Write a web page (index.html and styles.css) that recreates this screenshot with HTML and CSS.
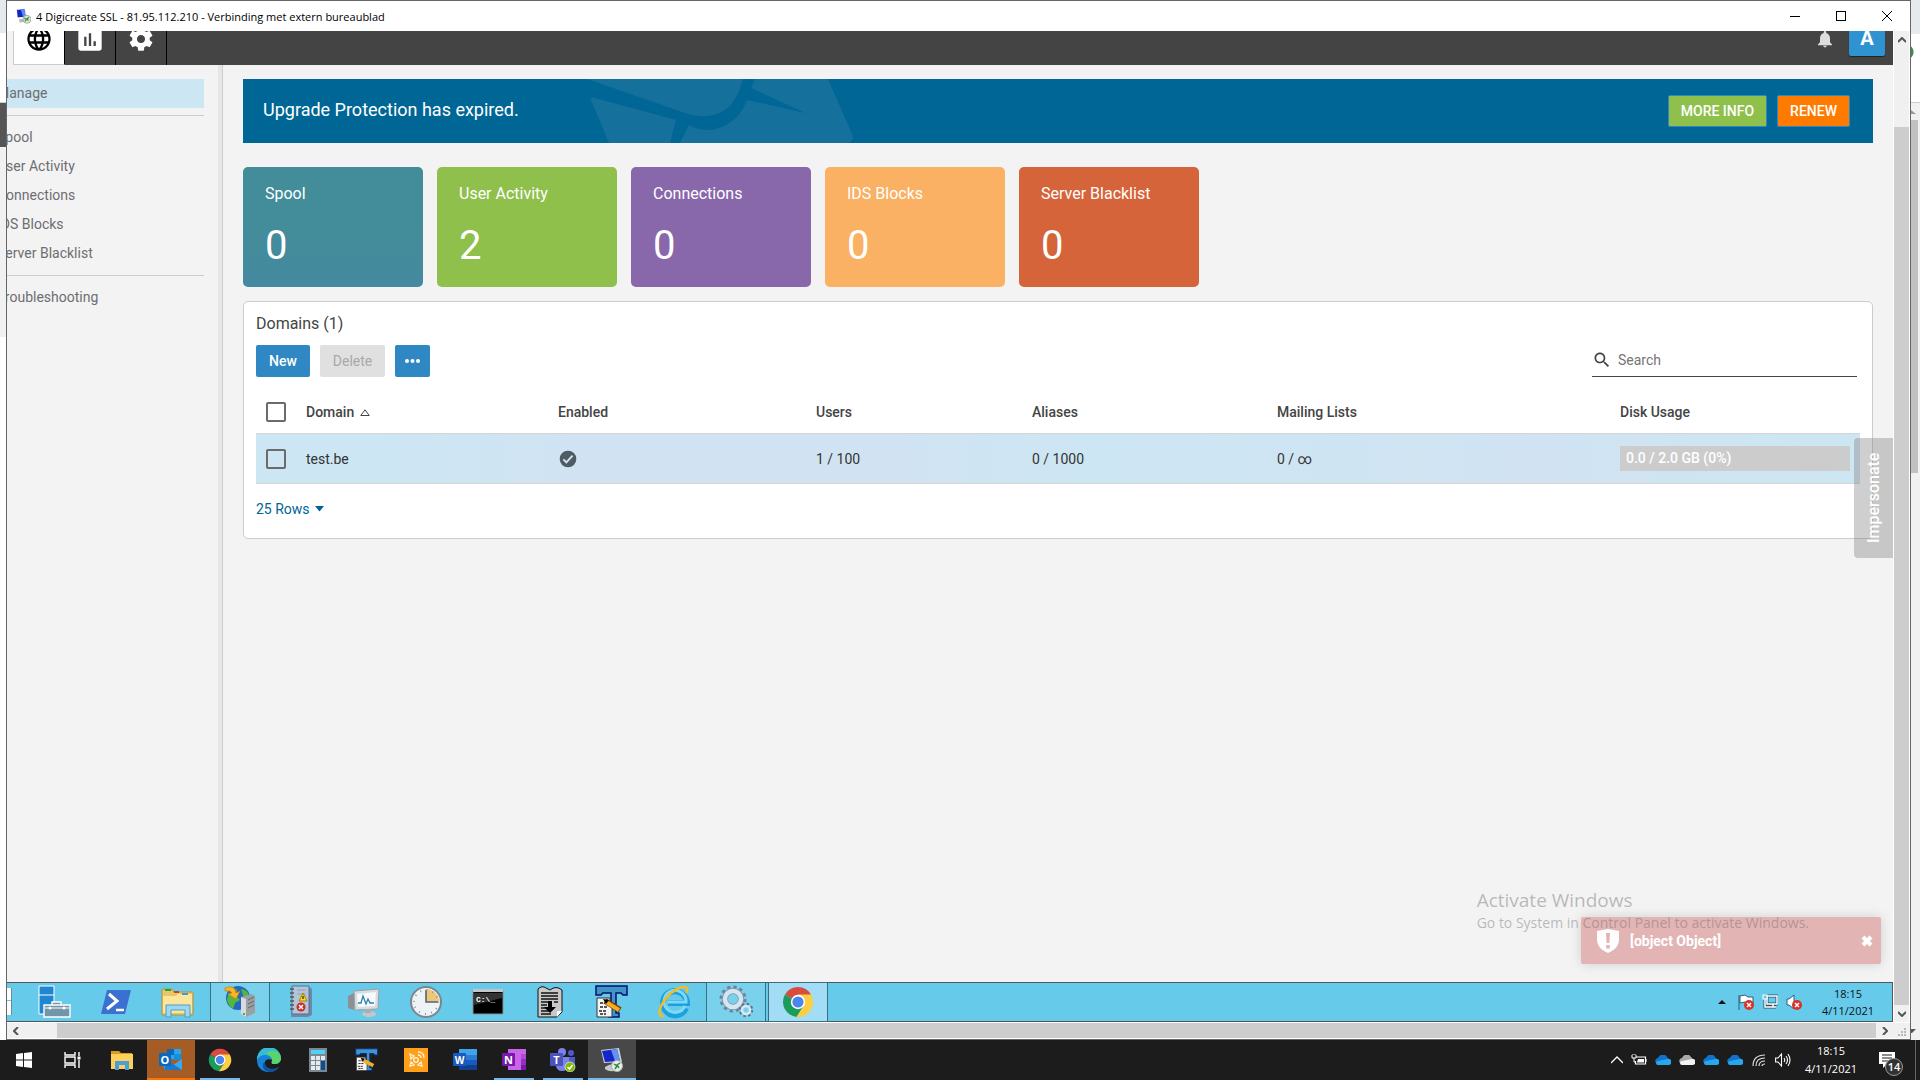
FILE: index.html
```html
<!DOCTYPE html>
<html lang="en">
<head>
    <meta charset="UTF-8">
    <meta name="viewport" content="width=device-width, initial-scale=1.0">
    <title>4 Digicreate SSL</title>
    <link rel="stylesheet" href="styles.css">
</head>
<body>

    <div class="workspace">
        <div class="edge edge-left"></div>

        <div class="window">
            <!-- Title bar -->
            <div class="titlebar">
                <svg class="title-icon" width="16" height="16" viewBox="0 0 24 24">
                    <path d="M2 2l13-1 3 13-14 1z" fill="#d8dce4"/>
                    <path d="M3 3l11-1 2 11-12 1z" fill="#1526c8"/>
                    <path d="M9 3l5-1 2 11-4 0z" fill="#5a8cf0"/>
                    <path d="M6 17l8-1 2 4-9 2z" fill="#b4b8bc"/>
                    <circle cx="18" cy="17" r="6" fill="#dfe6df" stroke="#8a948a"/>
                    <path d="M14 15l3 2-2 3M21 14l-3 2 2 3" stroke="#2f9a3c" stroke-width="2" fill="none"/>
                </svg>
                <span class="title-text">4 Digicreate SSL - 81.95.112.210 - Verbinding met extern bureaublad</span>
                <button class="win-btn" aria-label="Minimize"><svg width="10" height="10"><path d="M0 5.500h10" stroke="#000"/></svg></button>
                <button class="win-btn" aria-label="Maximize"><svg width="10" height="10"><rect x=".5" y=".5" width="9" height="9" fill="none" stroke="#000"/></svg></button>
                <button class="win-btn" aria-label="Close"><svg width="10" height="10"><path d="M0 0l10 10M10 0L0 10" stroke="#000"/></svg></button>
            </div>

            <div class="window-body">
                <div class="remote">
                    <!-- Top navigation -->
                    <header class="topnav">
                        <nav class="tabs">
                            <a class="tab active" href="#" aria-label="Domains">
                                <svg width="28" height="28" viewBox="0 0 24 24"><path fill="#000" d="M11.990 2C6.470 2 2 6.480 2 12s4.470 10 9.990 10C17.520 22 22 17.520 22 12S17.520 2 11.990 2zm6.930 6h-2.950c-.32-1.250-.78-2.450-1.380-3.560 1.840.63 3.370 1.910 4.330 3.560zM12 4.040c.83 1.200 1.480 2.530 1.910 3.960h-3.820c.43-1.430 1.080-2.760 1.910-3.960zM4.260 14C4.100 13.360 4 12.690 4 12s.1-1.360.26-2h3.380c-.08.66-.14 1.320-.14 2s.06 1.340.14 2H4.260zm.82 2h2.950c.32 1.250.78 2.450 1.380 3.560-1.840-.63-3.370-1.900-4.330-3.560zm2.950-8H5.080c.96-1.660 2.490-2.930 4.330-3.560C8.810 5.550 8.350 6.750 8.030 8zM12 19.960c-.83-1.200-1.480-2.530-1.910-3.960h3.820c-.43 1.430-1.080 2.760-1.910 3.960zM14.340 14H9.660c-.09-.66-.16-1.320-.16-2s.07-1.350.16-2h4.680c.09.65.16 1.320.16 2s-.07 1.340-.16 2zm.25 5.560c.6-1.110 1.060-2.310 1.380-3.560h2.950c-.96 1.650-2.490 2.930-4.330 3.560zM16.360 14c.08-.66.14-1.320.14-2s-.06-1.340-.14-2h3.380c.16.64.26 1.310.26 2s-.1 1.360-.26 2h-3.380z"/></svg>
                            </a>
                            <a class="tab" href="#" aria-label="Reports">
                                <svg width="28" height="28" viewBox="0 0 24 24"><rect x="2" y="2" width="20" height="20" rx="2" fill="#fff"/><path fill="#444" d="M7 10h2v8H7zM11 7h2v11h-2zM15 14h2v4h-2z"/></svg>
                            </a>
                            <a class="tab" href="#" aria-label="Settings">
                                <svg width="28" height="28" viewBox="0 0 24 24"><path fill="#fff" d="M19.430 12.980c.04-.32.07-.64.07-.98s-.03-.66-.07-.98l2.110-1.650c.19-.15.24-.42.12-.64l-2-3.460c-.12-.22-.39-.3-.61-.22l-2.490 1c-.52-.4-1.080-.73-1.690-.98l-.38-2.650C14.460 2.180 14.250 2 14 2h-4c-.25 0-.46.18-.49.42l-.38 2.650c-.61.25-1.170.59-1.690.98l-2.490-1c-.23-.09-.49 0-.61.22l-2 3.460c-.13.22-.07.49.12.64l2.110 1.650c-.04.32-.07.65-.07.98s.03.66.07.98l-2.110 1.650c-.19.15-.24.42-.12.64l2 3.460c.12.22.39.3.61.22l2.490-1c.52.4 1.080.73 1.690.98l.38 2.650c.03.24.24.42.49.42h4c.25 0 .46-.18.49-.42l.38-2.650c.61-.25 1.170-.59 1.690-.98l2.490 1c.23.09.49 0 .61-.22l2-3.460c.12-.22.07-.49-.12-.64l-2.110-1.650zM12 15.500c-1.930 0-3.500-1.570-3.500-3.500s1.570-3.500 3.500-3.500 3.500 1.570 3.500 3.500-1.570 3.500-3.500 3.500z"/></svg>
                            </a>
                        </nav>
                        <div class="topnav-right">
                            <button class="bell" aria-label="Notifications"><svg width="20" height="20" viewBox="0 0 24 24"><path fill="#ddd" d="M12 22c1.100 0 2-.9 2-2h-4c0 1.100.9 2 2 2zm6-6v-5c0-3.070-1.640-5.640-4.500-6.320V4c0-.83-.67-1.500-1.500-1.500s-1.500.67-1.500 1.500v.68C7.630 5.360 6 7.920 6 11v5l-2.500 2.500v1h17v-1L18 16z"/></svg></button>
                            <button class="avatar">A</button>
                        </div>
                    </header>

                    <div class="layout">
                        <!-- Sidebar -->
                        <nav class="sidebar">
                            <ul class="menu">
                                <li><a class="selected" href="#">Manage</a></li>
                            </ul>
                            <ul class="menu">
                                <li><a href="#">Spool</a></li>
                                <li><a href="#">User Activity</a></li>
                                <li><a href="#">Connections</a></li>
                                <li><a href="#">IDS Blocks</a></li>
                                <li><a href="#">Server Blacklist</a></li>
                            </ul>
                            <ul class="menu">
                                <li><a href="#">Troubleshooting</a></li>
                            </ul>
                        </nav>

                        <main class="main">
                            <div class="banner">
                                <svg class="banner-art" width="640" height="64" viewBox="0 0 640 64">
                                    <path d="M344 0H500Q496 16 487 27Q470 43 442 34Z"/>
                                    <path d="M348 21Q347 17 352 19L433 41L427 64H366Z"/>
                                    <path d="M446 46Q464 56 483 46Q498 38 504 21L562 34L508 9L512 0H585L610 57Q611 62 605 64H437Z"/>
                                </svg>
                                <span class="banner-text">Upgrade Protection has expired.</span>
                                <button class="banner-btn green">MORE INFO</button>
                                <button class="banner-btn orange">RENEW</button>
                            </div>

                            <div class="tiles">
                                <a class="tile teal" href="#"><span>Spool</span><strong>0</strong></a>
                                <a class="tile lime" href="#"><span>User Activity</span><strong>2</strong></a>
                                <a class="tile purple" href="#"><span>Connections</span><strong>0</strong></a>
                                <a class="tile amber" href="#"><span>IDS Blocks</span><strong>0</strong></a>
                                <a class="tile red" href="#"><span>Server Blacklist</span><strong>0</strong></a>
                            </div>

                            <section class="panel">
                                <h1>Domains (1)</h1>
                                <div class="toolbar">
                                    <button class="btn">New</button>
                                    <button class="btn" disabled>Delete</button>
                                    <button class="btn more" aria-label="More"><svg width="15" height="4"><circle cx="2" cy="2" r="2"/><circle cx="7.500" cy="2" r="2"/><circle cx="13" cy="2" r="2"/></svg></button>
                                    <label class="search">
                                        <svg width="20" height="20" viewBox="0 0 24 24"><path fill="#444" d="M15.500 14h-.79l-.28-.27C15.410 12.590 16 11.110 16 9.500 16 5.910 13.090 3 9.500 3S3 5.910 3 9.500 5.910 16 9.500 16c1.610 0 3.090-.59 4.230-1.570l.27.28v.79l5 4.990L20.490 19l-4.990-5zm-6 0C7.010 14 5 11.990 5 9.500S7.010 5 9.500 5 14 7.010 14 9.500 11.990 14 9.500 14z"/></svg>
                                        <input type="text" placeholder="Search">
                                    </label>
                                </div>

                                <table class="grid">
                                    <thead>
                                        <tr>
                                            <th class="col-check"><input type="checkbox" aria-label="Select all"></th>
                                            <th class="col-domain">Domain <svg width="10" height="7" viewBox="0 0 10 7"><path d="M5 .8L9.200 6.500H.8z" fill="none" stroke="#444"/></svg></th>
                                            <th class="col-enabled">Enabled</th>
                                            <th class="col-users">Users</th>
                                            <th class="col-aliases">Aliases</th>
                                            <th>Mailing Lists</th>
                                            <th class="col-disk">Disk Usage</th>
                                        </tr>
                                    </thead>
                                    <tbody>
                                        <tr>
                                            <td><input type="checkbox" aria-label="Select test.be"></td>
                                            <td>test.be</td>
                                            <td><svg class="check" width="20" height="20" viewBox="0 0 24 24"><circle cx="12" cy="12" r="10" fill="#4f5b62"/><path d="M6.500 12.500l3.500 3.500 7.500-8" fill="none" stroke="#d1e3f2" stroke-width="2.400"/></svg></td>
                                            <td>1 / 100</td>
                                            <td>0 / 1000</td>
                                            <td>0 / ∞</td>
                                            <td><div class="usage">0.0 / 2.0 GB (0%)</div></td>
                                        </tr>
                                    </tbody>
                                </table>

                                <div class="pager">
                                    <select aria-label="Rows per page"><option>25 Rows</option></select>
                                    <svg width="10" height="6"><path d="M0 0h9L4.500 5.500z" fill="#006596"/></svg>
                                </div>
                            </section>
                        </main>
                    </div>

                    <button class="impersonate">Impersonate</button>

                    <div class="toast">
                        <svg width="24" height="24" viewBox="0 0 24 24"><path fill="#fff" d="M12 0l11 2v8c0 7-4 11-11 14C5 21 1 17 1 10V2z"/><path fill="#e3b4b4" d="M10 4h4l-.6 10h-2.800zM10.200 16h3.600v3.400h-3.600z"/></svg>
                        <span>[object Object]</span>
                        <button aria-label="Dismiss"><svg width="12" height="12"><path d="M2 2l8 8M10 2l-8 8" stroke="#fff" stroke-width="4"/></svg></button>
                    </div>

                    <div class="activate">
                        <p class="activate-title">Activate Windows</p>
                        <p>Go to System in Control Panel to activate Windows.</p>
                    </div>

                    <!-- Taskbar of the remote server -->
                    <div class="server-bar">
                        <span class="server-start"></span>
                        <div class="server-apps">
                            <button aria-label="Server Manager"><svg width="34" height="34" viewBox="0 0 34 34"><path d="M2 1h15v28H2z" fill="#1f86d1" stroke="#fff"/><path d="M2 10h15" stroke="#fff"/><path d="M7 20h26v12H7zM15 20v-3h9v3" fill="#7295aa" stroke="#fff" stroke-width="1.400"/><path d="M8 23h24" stroke="#fff"/><circle cx="13" cy="23" r="1.500" fill="#fff"/><circle cx="27" cy="23" r="1.500" fill="#fff"/></svg></button>
                            <button aria-label="PowerShell"><svg width="34" height="34" viewBox="0 0 34 34"><path d="M8 5h24l-6 24H2z" fill="#3b6fd0"/><path d="M10 9l8 7-10 8" fill="none" stroke="#fff" stroke-width="3"/><path d="M17 25h8" stroke="#fff" stroke-width="2.500"/></svg></button>
                            <button aria-label="Explorer"><svg width="34" height="34" viewBox="0 0 34 34"><path d="M1 5q0-1 1-1h9l2 3h18q1 0 1 1v22H1z" fill="#e8c766" stroke="#b8923c"/><path d="M2 11h13l2-2h14v19H2z" fill="#fbe69c"/><path d="M4 4h6v2H4z" fill="#27a42c"/><path d="M13 6h5v2h-5z" fill="#d93c2c"/><path d="M21 8h6v2h-6z" fill="#3f98e0"/><path d="M5 32V20h24v12h-5v-7H10v7z" fill="#9ed7f2" stroke="#4c9fc9"/></svg></button>
                            <button class="open" aria-label="IIS"><svg width="34" height="34" viewBox="0 0 34 34"><circle cx="15" cy="13" r="12" fill="#2566c4"/><path d="M5 10q5-6 9-6l-1 7 4 4-5 3-2 6q-5-4-6-9zM18 4q7 1 8 7l-5 2z" fill="#52b83c"/><path d="M2 3q10-4 11 5l4-2-4 8-8-5 4-1q-2-3-7-2z" fill="#f9b522" stroke="#c47c0c" stroke-width=".7"/><path d="M18 12l10-3 4 2v17l-9 4-5-3z" fill="#9b9fa3"/><path d="M18 12l5 2v18l-5-3z" fill="#d9dcdf"/><path d="M25 15l6-3M25 19l6-3M25 23l6-3" stroke="#636669"/><path d="M20 28h2v2h-2z" fill="#36b83a"/></svg></button>
                            <button aria-label="Event Viewer"><svg width="34" height="34" viewBox="0 0 34 34"><path d="M8 2h16l3 2v26l-4 2H6z" fill="#6f87a8"/><path d="M7 1h17v28H7z" fill="#b4c5da" stroke="#57718f"/><path d="M5 4h4M5 8h4M5 12h4M5 16h4M5 20h4M5 24h4" stroke="#555" stroke-width="1.500"/><path d="M12 5h9M12 9h9" stroke="#8ea3bd"/><path d="M18 8l4 8h-8z" fill="#ffd91a" stroke="#a48500"/><path d="M18 11v3" stroke="#000"/><circle cx="16" cy="22" r="4.500" fill="#cf2a2a"/><path d="M14 20l4 4M18 20l-4 4" stroke="#fff" stroke-width="1.500"/></svg></button>
                            <button aria-label="Performance Monitor"><svg width="34" height="34" viewBox="0 0 34 34"><path d="M1 11l6-3v17l-6-2z" fill="#8b9096"/><path d="M7 6l25-2-1 20-23 1z" fill="#d9dde0" stroke="#9ba0a5"/><path d="M10 9l19-2-1 14-17 1z" fill="#f5fafd"/><path d="M11 18h3l2-7 3 8 2-5 2 4h4" fill="none" stroke="#2f7fae" stroke-width="1.300"/><ellipse cx="22" cy="29" rx="7" ry="3" fill="#c3c7cb"/><path d="M18 24h6v4h-6z" fill="#a9aeb3"/></svg></button>
                            <button aria-label="Task Scheduler"><svg width="34" height="34" viewBox="0 0 34 34"><circle cx="17" cy="17" r="15" fill="#eef3f7" stroke="#7d858b" stroke-width="2"/><path d="M17 17V4a13 13 0 0 1 13 13z" fill="#ecc777"/><path d="M17 5v12h12" fill="none" stroke="#54646f" stroke-width="1.600"/><circle cx="17" cy="17" r="12" fill="none" stroke="#8898a3" stroke-width="2" stroke-dasharray="1 5.280"/></svg></button>
                            <button aria-label="Command Prompt"><svg width="34" height="34" viewBox="0 0 34 34"><path d="M2 5h30v24H2z" fill="#000" stroke="#8a8f93"/><path d="M2 4h30v3H2z" fill="#c2c6c9"/><path d="M3 8h28v5L3 20z" fill="#333"/><text x="5" y="17" font-family="Liberation Mono" font-size="8" font-weight="bold" fill="#fff">C:\_</text></svg></button>
                            <button aria-label="Log"><svg width="34" height="34" viewBox="0 0 34 34"><path d="M5 4q4-4 8-1l4 2q6-5 12 0v22l-5 5H5z" fill="#c8c8c8" stroke="#111"/><path d="M8 8h17M8 11h17M8 14h17M8 17h7M21 17h4M8 20h6M8 23h8M8 26h10M8 29h10" stroke="#111" stroke-width="1.400"/><path d="M15 16h4v6h4l-6 6-6-6h4z" fill="#000"/><path d="M24 32v-6h5z" fill="#fff"/></svg></button>
                            <button aria-label="Text Editor"><svg width="34" height="34" viewBox="0 0 34 34"><path d="M1 1h31v9h-4l-2-2h-5v20h3v4H14v-4h2V8H8l-2 2H1z" fill="#4094c8" stroke="#07116e" stroke-width="1.500"/><path d="M2 13h13v8l2 2v9H2z" fill="#f4f4f4" stroke="#333"/><path d="M5 18h7M5 22h8M4 26h7M5 29h6" stroke="#222" stroke-width="1.300" stroke-dasharray="3 1"/><path d="M10 16l15 9" stroke="#7c3a00" stroke-width="6"/><path d="M11 17l13 8" stroke="#f8ae1c" stroke-width="4"/><path d="M8 14l6 1-3 4z" fill="#000"/></svg></button>
                            <button aria-label="Internet Explorer"><svg width="34" height="34" viewBox="0 0 34 34"><path d="M29 23a12 12 0 1 1 1-5H11" fill="none" stroke="#1ba1df" stroke-width="6"/><path d="M28 21a11 11 0 1 1 1-4H11" fill="none" stroke="#7fd8f8" stroke-width="3"/><path d="M7 31Q-1 32 5 19Q14 5 25 2Q33 1 29 8" fill="none" stroke="#f2bd22" stroke-width="2.500"/></svg></button>
                            <button class="open" aria-label="Services"><svg width="34" height="34" viewBox="0 0 34 34"><circle cx="14" cy="14" r="11.500" fill="none" stroke="#6d8499" stroke-width="4" stroke-dasharray="3.100 2.920"/><circle cx="14" cy="14" r="8" fill="none" stroke="#7d94a9" stroke-width="6"/><circle cx="14" cy="14" r="8" fill="none" stroke="#d5e6f2" stroke-width="4.500"/><circle cx="27" cy="25" r="6" fill="none" stroke="#5f7489" stroke-width="2.500" stroke-dasharray="2.400 2.300"/><circle cx="27" cy="25" r="4" fill="none" stroke="#dce9f3" stroke-width="2.500"/></svg></button>
                            <button class="open front" aria-label="Chrome"><svg width="32" height="32" viewBox="0 0 32 32"><path d="M16 16L3 8.500A15 15 0 0 1 29 8.500z" fill="#d94b3f"/><path d="M16 16L3 8.500a15 15 0 0 0 11.500 22.400L22 19.500z" fill="#1c9c5a"/><path d="M16 16l6 3.500-7.500 11.400A15 15 0 0 0 29 8.500H16z" fill="#fcce42"/><circle cx="16" cy="16" r="7.200" fill="#fff"/><circle cx="16" cy="16" r="5.600" fill="#4a86ee"/></svg></button>
                        </div>
                        <div class="server-tray">
                            <svg class="tray-more" width="8" height="4"><path d="M0 4h8L4 0z" fill="#111"/></svg>
                            <svg width="16" height="16" viewBox="0 0 16 16"><path d="M1 1v15M2 2l5-1 3 2h5v7H9L7 8 2 9z" fill="#fff" stroke="#2b5f78"/><circle cx="11" cy="11" r="5" fill="#dc3026"/><path d="M9 9l4 4M13 9l-4 4" stroke="#fff" stroke-width="1.500"/></svg>
                            <svg width="16" height="16" viewBox="0 0 16 16"><path d="M5 2h10v8H5zM8 13h6M11 10v3M3 5v8h5" fill="none" stroke="#26546c" stroke-width="3"/><path d="M5 2h10v8H5zM8 13h6M11 10v3M3 5v8h5" fill="none" stroke="#fff" stroke-width="1.500"/><rect x="1" y="1" width="4" height="4" fill="#66caeb" stroke="#fff"/></svg>
                            <svg width="16" height="16" viewBox="0 0 16 16"><path d="M1 5h2l5-4v14l-5-4H1z" fill="#fff" stroke="#2b5f78"/><circle cx="11" cy="11" r="5" fill="#dc3026"/><path d="M9 9l4 4M13 9l-4 4" stroke="#fff" stroke-width="1.500"/></svg>
                            <div class="clock"><span>18:15</span><span>4/11/2021</span></div>
                        </div>
                    </div>
                </div>

                <div class="vscroll">
                    <button aria-label="Scroll up"><svg width="8" height="6"><path d="M0 5l4-4 4 4" fill="none" stroke="#555" stroke-width="2"/></svg></button>
                    <div class="vthumb"></div>
                    <button aria-label="Scroll down"><svg width="8" height="6"><path d="M0 1l4 4 4-4" fill="none" stroke="#555" stroke-width="2"/></svg></button>
                </div>
            </div>

            <div class="hscroll">
                <button aria-label="Scroll left"><svg width="6" height="8"><path d="M5 0L1 4l4 4" fill="none" stroke="#555" stroke-width="2"/></svg></button>
                <div class="hthumb"></div>
                <button aria-label="Scroll right"><svg width="6" height="8"><path d="M1 0l4 4-4 4" fill="none" stroke="#555" stroke-width="2"/></svg></button>
                <svg class="grip" width="10" height="10" fill="#b8b8b8"><path d="M7 0h2v2H7zM4 3h2v2H4zM7 3h2v2H7zM1 6h2v2H1zM4 6h2v2H4zM7 6h2v2H7z"/></svg>
            </div>
        </div>

        <div class="edge edge-right">
            <svg width="6" height="4"><path d="M0 0l5 4H0z" fill="#999"/></svg>
            <svg width="6" height="4"><path d="M0 0h5L1 4H0z" fill="#555"/></svg>
        </div>
    </div>

    <!-- Taskbar of the local machine -->
    <footer class="host-bar">
        <div class="host-apps">
            <button aria-label="Start"><svg width="16" height="16" viewBox="0 0 16 16"><path d="M0 2l7-1v6.500H0zM8 1l8-1v7.500H8zM0 8.500h7V15l-7-1zM8 8.500h8V16l-8-1z" fill="#fff"/></svg></button>
            <button aria-label="Task View"><svg width="18" height="16" viewBox="0 0 18 16"><path d="M1 0v3h10V0M1 16v-3h10v3M1 5h10v6H1zM15 0v4M15 8v8" fill="none" stroke="#fff" stroke-width="1.400"/><path d="M13.500 4.500h3v3h-3z" fill="#fff"/></svg></button>
            <button aria-label="File Explorer"><svg width="24" height="24" viewBox="0 0 24 24"><path d="M1 3h8l2 2h11v5H1z" fill="#dc9a1a"/><path d="M1 6h22v15H1z" fill="#fdd05b"/><path d="M5 22v-9h14v9h-4v-5H9v5z" fill="#4a9fdb"/></svg></button>
            <button class="alert" aria-label="Outlook"><svg width="26" height="24" viewBox="0 0 26 24"><path d="M9 1h14v10H9z" fill="#28a8ea"/><path d="M9 1h7v6H9z" fill="#0f68b8"/><path d="M16 6h7v6h-7z" fill="#1490df"/><path d="M6 22h18V11l-9 6-9-6z" fill="#3fa7ea"/><path d="M6 22h18L9 12z" fill="#1b79cb"/><rect x="1" y="5" width="12" height="13" rx="1" fill="#0969c0"/><text x="7" y="15.500" font-family="Open Sans" font-size="11" font-weight="bold" text-anchor="middle" fill="#fff">O</text></svg></button>
            <button class="running" aria-label="Google Chrome"><svg width="24" height="24" viewBox="0 0 32 32"><path d="M16 16L3 8.500A15 15 0 0 1 29 8.500z" fill="#d94b3f"/><path d="M16 16L3 8.500a15 15 0 0 0 11.500 22.400L22 19.500z" fill="#1c9c5a"/><path d="M16 16l6 3.500-7.500 11.400A15 15 0 0 0 29 8.500H16z" fill="#fcce42"/><circle cx="16" cy="16" r="7.200" fill="#fff"/><circle cx="16" cy="16" r="5.600" fill="#4a86ee"/></svg></button>
            <button aria-label="Edge"><svg width="24" height="24" viewBox="0 0 24 24"><path d="M0 12A12 12 0 0 1 24 10c0 5-4 6-7 6-2 0-3-1-2-3 1-5-10-7-15-1z" fill="#35c1b4"/><path d="M0 12A12 12 0 0 1 12 0c7 0 11 4 12 9-3-6-17-8-24 3z" fill="#36b9e4"/><path d="M24 10c0 5-4 6-7 6-2 0-3-1-2-3 0-5-3-7-7-7 7-6 15-3 16 4z" fill="#5bd46c"/><path d="M0 12c3-6 13-7 15 0-4-2-8 0-7 4 1 5 8 7 14 3-5 8-22 7-22-7z" fill="#1684d8"/><path d="M8 14c-1 6 7 9 14 5-3 5-9 6-13 4-4-3-4-8-1-9z" fill="#0c529e"/></svg></button>
            <button aria-label="Calculator"><svg width="18" height="24" viewBox="0 0 18 24"><path d="M0 0h18v24H0z" fill="#7b8791"/><path d="M2 2h14v4H2z" fill="#4ed2f5"/><path d="M2 8h4v4H2zM7 8h4v4H7zM12 8h4v4h-4zM2 13h4v4H2zM7 13h4v4H7zM2 18h4v4H2zM7 18h4v4H7z" fill="#e6eaee"/><path d="M12 13h4v9h-4z" fill="#0b4f91"/></svg></button>
            <button aria-label="Text Editor"><svg width="24" height="24" viewBox="0 0 34 34"><path d="M1 1h31v9h-4l-2-2h-5v20h3v4H14v-4h2V8H8l-2 2H1z" fill="#4094c8" stroke="#0b2f7e" stroke-width="1.500"/><path d="M2 13h13v8l2 2v9H2z" fill="#f4f4f4" stroke="#333"/><path d="M5 18h7M5 22h8M4 26h7M5 29h6" stroke="#222" stroke-width="1.300" stroke-dasharray="3 1"/><path d="M11 17l15 8" stroke="#f8ae1c" stroke-width="5"/><path d="M8 14l6 1-3 4z" fill="#000"/></svg></button>
            <button aria-label="Remote Manager"><svg width="24" height="24" viewBox="0 0 24 24"><path d="M0 0h24v24H0z" fill="#ff9f1a"/><g fill="none" stroke="#fff3dc" stroke-width="1.300"><circle cx="12" cy="12" r="2.300"/><path d="M6 6l4 2-3 3zM6 18l1-4 3 3zM18 18l-4-1 3-3zM14 7q3 0 3 3M14 4q6 0 6 6"/></g></svg></button>
            <button aria-label="Word"><svg width="24" height="22" viewBox="0 0 24 22"><path d="M6 0h18v6H6z" fill="#41a5ee"/><path d="M6 6h18v5H6z" fill="#2b7cd3"/><path d="M6 11h18v5H6z" fill="#185abd"/><path d="M6 16h18v5H6z" fill="#103f91"/><rect y="4" width="13" height="13" rx="1" fill="#185abd"/><text x="6.500" y="14.500" font-family="Open Sans" font-size="10" font-weight="bold" text-anchor="middle" fill="#fff">W</text></svg></button>
            <button class="running" aria-label="OneNote"><svg width="24" height="22" viewBox="0 0 24 22"><path d="M6 0h18v21H6z" fill="#ca64ea"/><path d="M19 5h5v5h-5z" fill="#ae4bd5"/><path d="M19 10h5v6h-5z" fill="#9332bf"/><path d="M19 16h5v5h-5z" fill="#7719aa"/><rect y="4" width="13" height="13" rx="1" fill="#7719aa"/><text x="6.500" y="14.500" font-family="Open Sans" font-size="11" font-weight="bold" text-anchor="middle" fill="#fff">N</text></svg></button>
            <button class="running" aria-label="Teams"><svg width="26" height="24" viewBox="0 0 26 24"><circle cx="12" cy="4" r="4" fill="#7b83eb"/><circle cx="21" cy="5" r="3" fill="#5059c9"/><path d="M15 9h10v8q-1 4-6 4z" fill="#5059c9"/><path d="M6 9h13v9q-2 5-7 5t-6-5z" fill="#7b83eb"/><rect y="5" width="13" height="13" rx="1" fill="#4b53bc"/><text x="6.500" y="15.500" font-family="Open Sans" font-size="11" font-weight="bold" text-anchor="middle" fill="#fff">T</text><circle cx="20" cy="19" r="5" fill="#7fba00" stroke="#fff" stroke-width=".6"/><path d="M17.500 19l2 2 3-4" fill="none" stroke="#fff" stroke-width="1.500"/></svg></button>
            <button class="current" aria-label="Remote Desktop"><svg width="24" height="24" viewBox="0 0 24 24"><path d="M1 2l18-2 3 14-18 1z" fill="#c9ced8"/><path d="M2 3l15-2 3 12-15 1z" fill="#1526c8"/><path d="M11 2l6-1 3 12-5 0z" fill="#6493ee"/><path d="M5 19q7-5 12-1l1 4q-8 3-13-1z" fill="#c6cacd"/><circle cx="17" cy="18" r="5.500" fill="#e9eee9" stroke="#aab3aa"/><path d="M14 16l3 2-2 3M20 15l-3 2 2 3" stroke="#2f8a3c" stroke-width="1.500" fill="none"/></svg></button>
        </div>
        <div class="host-tray">
            <svg width="12" height="8"><path d="M0 7l6-6 6 6" fill="none" stroke="#fff" stroke-width="1.300"/></svg>
            <svg width="16" height="12" viewBox="0 0 16 12"><path d="M5 3h9.500v7H4.500V7M15 5v3" fill="none" stroke="#fff" stroke-width="1.200"/><path d="M7 5h6v3.500H6z" fill="#fff"/><path d="M1 1v3h4V1M3 4v4h2M2 0v1M4 0v1" stroke="#fff" fill="none"/></svg>
            <svg width="16" height="10" viewBox="0 0 16 10"><path d="M1 8a3 3 0 0 1 2-5 5 5 0 0 1 9-1l3 3-7 5z" fill="#1173cf"/><path d="M3 10a2 2 0 0 1 0-4l5-1 5-1a3 3 0 0 1 1 6z" fill="#28a8ea"/></svg>
            <svg width="16" height="10" viewBox="0 0 16 10"><path d="M1 8a3 3 0 0 1 2-5 5 5 0 0 1 9-1l3 3-7 5z" fill="#a9a9a9"/><path d="M3 10a2 2 0 0 1 0-4l5-1 5-1a3 3 0 0 1 1 6z" fill="#f2f2f2"/></svg>
            <svg width="16" height="10" viewBox="0 0 16 10"><path d="M1 8a3 3 0 0 1 2-5 5 5 0 0 1 9-1l3 3-7 5z" fill="#1173cf"/><path d="M3 10a2 2 0 0 1 0-4l5-1 5-1a3 3 0 0 1 1 6z" fill="#28a8ea"/></svg>
            <svg width="16" height="10" viewBox="0 0 16 10"><path d="M1 8a3 3 0 0 1 2-5 5 5 0 0 1 9-1l3 3-7 5z" fill="#1173cf"/><path d="M3 10a2 2 0 0 1 0-4l5-1 5-1a3 3 0 0 1 1 6z" fill="#28a8ea"/></svg>
            <svg width="16" height="14" viewBox="0 0 16 14"><path d="M2 13Q2 2 14 2M5 13q0-8 9-8M8 13q0-5 6-5M11 13q0-2 3-2" fill="none" stroke="#ddd" stroke-width="1.200"/></svg>
            <svg width="16" height="14" viewBox="0 0 16 14"><path d="M.6 5H3l3.500-4v12L3 9H.6zM9 5q1.500 2 0 4M11 3q3 4 0 8M13 1q4 6 0 12" fill="none" stroke="#fff" stroke-width="1.100"/></svg>
            <div class="clock"><span>18:15</span><span>4/11/2021</span></div>
            <button class="action-center" aria-label="Notifications">
                <svg width="16" height="16" viewBox="0 0 16 16"><path d="M0 0h16v12H8l-4 4v-4H0z" fill="#fff"/><path d="M3 3h10M3 6h10M3 9h6" stroke="#1c1c1c"/></svg>
                <span class="badge">14</span>
            </button>
        </div>
    </footer>

</body>
</html>
```
FILE: styles.css
```css
* {
    box-sizing: border-box;
}
body {
    margin: 0;
    height: 100vh;
    display: flex;
    flex-direction: column;
    overflow: hidden;
    font-family: Roboto, sans-serif;
    font-size: 14px;
    color: #444;
}
button {
    font-family: inherit;
    padding: 0;
    border: none;
    background: none;
    cursor: pointer;
}
a {
    text-decoration: none;
    color: inherit;
}
svg {
    display: block;
    flex: none;
}

/* Desktop behind the window */
.workspace {
    flex: 1;
    min-height: 0;
    display: flex;
}
.edge-left {
    width: 6px;
    background: linear-gradient(#e6eaed 33px, #fff 33px 102px, #ccc 102px 103px, #555 103px 147px, #f1f1f1 147px 337px, #fff 337px);
}
.edge-right {
    width: 9px;
    padding: 110px 0 7px;
    display: flex;
    flex-direction: column;
    justify-content: space-between;
    background:
        linear-gradient(#c1c1c1, #c1c1c1) 0 120px / 7px 353px no-repeat,
        radial-gradient(circle at -5px 52px, #3c8a57 7px, transparent 8px),
        linear-gradient(#e6eaed 34px, #fff 34px 102px, #ccc 102px 103px, #f1f1f1 103px);
}

/* Window */
.window {
    flex: 1;
    min-width: 0;
    display: flex;
    flex-direction: column;
    border: 1px solid #666;
    background: #f0f0f0;
}
.titlebar {
    height: 30px;
    display: flex;
    align-items: center;
    background: #fff;
    padding-left: 8px;
}
.title-text {
    flex: 1;
    margin-left: 5px;
    font-family: "Open Sans", sans-serif;
    font-size: 11px;
    color: #000;
}
.win-btn {
    width: 46px;
    height: 30px;
    display: flex;
    align-items: center;
    justify-content: center;
}
.window-body {
    flex: 1;
    min-height: 0;
    display: flex;
}
.remote {
    position: relative;
    flex: 1;
    min-width: 0;
    display: flex;
    flex-direction: column;
    overflow: hidden;
    background: #f3f3f3;
}

/* Top navigation */
.topnav {
    flex: none;
    height: 34px;
    margin-left: 6px;
    display: flex;
    justify-content: space-between;
    overflow: hidden;
    background: #444;
}
.tabs {
    display: flex;
}
.tab {
    width: 51px;
    display: flex;
    align-items: flex-end;
    justify-content: center;
    padding-bottom: 12px;
    border-right: 1px solid #000;
}
.tab.active {
    width: 52px;
    background: #fff;
    border-left: 1px solid #ccc;
    border-bottom: 1px solid #ccc;
    padding-bottom: 11px;
}
.topnav-right {
    display: flex;
    align-items: flex-end;
    gap: 14px;
    padding: 0 8px 9px 0;
}
.bell {
    padding-bottom: 7px;
}
.avatar {
    width: 36px;
    height: 36px;
    border-radius: 2px;
    background: #2f93d1;
    color: #fff;
    font-size: 20px;
    font-weight: 700;
    box-shadow: 0 1px 1px #222;
}

/* Sidebar */
.layout {
    flex: 1;
    min-height: 0;
    display: flex;
}
.sidebar {
    width: 216px;
    padding: 14px 14px 0 0;
    border-right: 1px solid #ccc;
    box-shadow: inset -4px 0 #e6e6e6;
}
.menu {
    list-style: none;
    width: 197px;
    margin: 0;
    padding: 0;
}
.menu + .menu {
    margin-top: 7px;
    padding-top: 7px;
    border-top: 1px solid #ccc;
}
.menu a {
    display: block;
    margin-left: -10px;
    height: 29px;
    line-height: 28px;
    color: #6d6e71;
}
.menu a.selected {
    background: #cde6f3;
}

/* Content */
.main {
    flex: 1;
    min-width: 0;
    padding: 14px 20px;
}
.banner {
    position: relative;
    height: 64px;
    display: flex;
    align-items: center;
    gap: 10px;
    padding: 0 23px 0 20px;
    background: #006696;
    color: #fff;
}
.banner-art {
    position: absolute;
    left: 0;
    top: 0;
    fill: #15709c;
}
.banner-text {
    position: relative;
    flex: 1;
    font-size: 18px;
    line-height: 22px;
    padding-bottom: 2px;
}
.banner-btn {
    height: 32px;
    padding: 0 12px;
    border: 1px solid #2f88c5;
    border-radius: 2px;
    color: #fff;
    font-size: 14px;
    font-weight: 500;
}
.green {
    background: #90c04c;
}
.orange {
    background: #ff7b00;
}
.tiles {
    display: flex;
    gap: 14px;
    margin: 24px 0 14px;
}
.tile {
    width: 180px;
    height: 120px;
    padding: 17px 22px;
    border-radius: 5px;
    color: #fff;
    font-size: 16px;
}
.tile span {
    display: block;
    line-height: 20px;
}
.tile strong {
    display: block;
    margin-top: 18px;
    font-size: 40px;
    font-weight: 400;
    line-height: 48px;
}
.teal {
    background: linear-gradient(#438c99 50%, #4589a0);
}
.lime {
    background: #90c04c;
}
.purple {
    background: #8967ab;
}
.amber {
    background: #fab164;
}
.red {
    background: #d6643a;
}

/* Domains panel */
.panel {
    padding: 12px 12px 19px;
    background: #fff;
    border: 1px solid #ccc;
    border-radius: 5px;
}
.panel h1 {
    margin: 0 0 11px;
    font-size: 16px;
    font-weight: 400;
    line-height: 20px;
}
.toolbar {
    display: flex;
    gap: 10px;
}
.btn {
    height: 32px;
    padding: 0 13px;
    border-radius: 2px;
    background: #2f87c3;
    color: #fff;
    font-size: 14px;
    font-weight: 500;
}
.btn:disabled {
    background: #e0e0e0;
    color: #a9a9a9;
    font-weight: 400;
}
.btn.more {
    padding: 0 10px;
    fill: #fff;
}
.search {
    width: 265px;
    height: 32px;
    margin-left: auto;
    margin-right: 3px;
    padding-bottom: 1px;
    display: flex;
    align-items: center;
    gap: 4px;
    border-bottom: 1px solid #444;
}
.search input {
    flex: 1;
    min-width: 0;
    border: none;
    outline: none;
    font-family: inherit;
    font-size: 14px;
}
.search input::placeholder {
    color: #757575;
}
.grid {
    width: 100%;
    margin-top: 14px;
    table-layout: fixed;
    border-collapse: collapse;
}
.grid th,
.grid td {
    padding: 1px 0 0;
    text-align: left;
}
.grid th {
    height: 42px;
    font-weight: 500;
}
.grid th svg {
    display: inline-block;
    margin-left: 2px;
    vertical-align: 1px;
}
.grid td {
    height: 50px;
    border-top: 1px solid #d5d5d5;
    border-bottom: 1px solid #d5d5d5;
    color: #333;
}
.grid tbody tr {
    background: linear-gradient(90deg, #cde6f3 8%, #d1e3f2 20%, #d1e3f2 40%, #cde6f3 52%, #d1e3f2 80%, #cde6f3);
}
.grid input {
    display: block;
    appearance: none;
    width: 20px;
    height: 20px;
    margin: 0 10px;
    border: 2px solid #6b6b6b;
    border-radius: 2px;
}
.col-check {
    width: 50px;
}
.col-domain {
    width: 252px;
}
.col-enabled {
    width: 258px;
}
.col-users {
    width: 216px;
}
.col-aliases {
    width: 245px;
}
.col-disk {
    width: 240px;
}
.usage {
    height: 25px;
    margin-right: 10px;
    padding-left: 6px;
    line-height: 24px;
    background: #ccc;
    color: #fff;
    font-weight: 500;
}
.pager {
    display: flex;
    align-items: center;
    gap: 5px;
    margin-top: 15px;
    height: 20px;
}
.pager select {
    appearance: none;
    padding: 0;
    border: none;
    background: none;
    font-family: inherit;
    font-size: 14px;
    color: #006596;
}

/* Things lying over the page */
.impersonate {
    position: absolute;
    right: 0;
    top: 407px;
    width: 39px;
    height: 120px;
    writing-mode: vertical-rl;
    transform: rotate(180deg);
    border-radius: 0 4px 4px 0;
    background: rgba(128, 128, 128, 0.38);
    color: #fff;
    font-size: 16px;
    font-weight: 500;
}
.toast {
    position: absolute;
    right: 12px;
    bottom: 58px;
    width: 300px;
    height: 47px;
    display: flex;
    align-items: center;
    gap: 10px;
    padding: 0 8px 0 15px;
    border-radius: 2px;
    background: #e3b4b4;
    box-shadow: 0 0 12px rgba(0, 0, 0, 0.15);
    color: #fff;
    font-weight: 700;
}
.toast span {
    flex: 1;
}
.activate {
    position: absolute;
    right: 84px;
    bottom: 89px;
    font-family: "Open Sans", sans-serif;
    font-size: 14px;
    line-height: 20px;
    color: rgba(110, 110, 110, 0.45);
}
.activate p {
    margin: 0;
}
.activate .activate-title {
    font-size: 19px;
    line-height: 26px;
}

/* Taskbar of the remote server */
.server-bar {
    flex: none;
    height: 40px;
    display: flex;
    background: #66caeb;
    border: 1px solid #555;
    border-left: none;
}
.server-start {
    width: 5px;
    margin: 5px 0 6px;
    background: linear-gradient(#fff 12px, #66caeb 12px 13px, #fff 13px);
    border-right: 1px solid #6b8b99;
}
.server-apps {
    display: flex;
    gap: 2px;
    margin: -1px 0 -1px 12px;
}
.server-apps button {
    width: 60px;
    display: flex;
    align-items: center;
    justify-content: center;
}
.server-apps .open {
    border: 1px solid #3b6e80;
    background: #79d1eb;
}
.server-apps .front {
    background: #a3dcf5;
}
.server-tray {
    flex: 1;
    display: flex;
    align-items: center;
    justify-content: flex-end;
    gap: 8px;
    color: #111;
}
.tray-more {
    margin-right: 4px;
}
.clock {
    display: flex;
    flex-direction: column;
    align-items: center;
    font-family: "Open Sans", sans-serif;
    font-size: 11px;
    line-height: 17px;
}
.server-tray .clock {
    width: 76px;
    margin-right: 6px;
}

/* Scrollbars */
.vscroll {
    width: 17px;
    display: flex;
    flex-direction: column;
    border-left: 1px solid #fff;
    border-right: 1px solid #fff;
}
.vscroll button {
    height: 17px;
    display: flex;
    align-items: center;
    justify-content: center;
}
.vthumb {
    flex: 1;
    margin-top: 79px;
    background: #cdcdcd;
}
.hscroll {
    height: 17px;
    display: flex;
    border-top: 1px solid #fff;
    border-bottom: 1px solid #fff;
}
.hscroll button {
    width: 17px;
    display: flex;
    align-items: center;
    justify-content: center;
}
.hthumb {
    flex: 1;
    margin-left: 33px;
    background: #cdcdcd;
}
.grip {
    margin: 5px 3px 0 4px;
}

/* Taskbar of the local machine */
.host-bar {
    flex: none;
    height: 40px;
    display: flex;
    justify-content: space-between;
    background: #1c1c1c;
    color: #fff;
}
.host-apps {
    display: flex;
    gap: 1px;
}
.host-apps button {
    width: 48px;
    display: flex;
    align-items: center;
    justify-content: center;
}
.host-apps .running {
    background: linear-gradient(#76b9ed, #76b9ed) center bottom / 40px 2px no-repeat;
}
.host-apps .alert {
    background: #a65c25;
    box-shadow: inset 0 -2px #ff7300;
}
.host-apps .current {
    background: #484848;
    box-shadow: inset 0 -2px #76b9ed;
}
.host-tray {
    display: flex;
    align-items: center;
    gap: 8px;
    border-right: 1px solid #666;
    margin-right: 4px;
}
.host-tray .clock {
    width: 64px;
    line-height: 18px;
}
.action-center {
    position: relative;
    width: 44px;
    height: 40px;
    padding-left: 8px;
    display: flex;
    align-items: center;
}
.badge {
    position: absolute;
    left: 14px;
    top: 18px;
    width: 18px;
    height: 18px;
    border: 1px solid #999;
    border-radius: 50%;
    background: #333;
    color: #fff;
    font-family: "Open Sans", sans-serif;
    font-size: 11px;
    font-weight: 600;
    line-height: 16px;
    text-align: center;
}
```
